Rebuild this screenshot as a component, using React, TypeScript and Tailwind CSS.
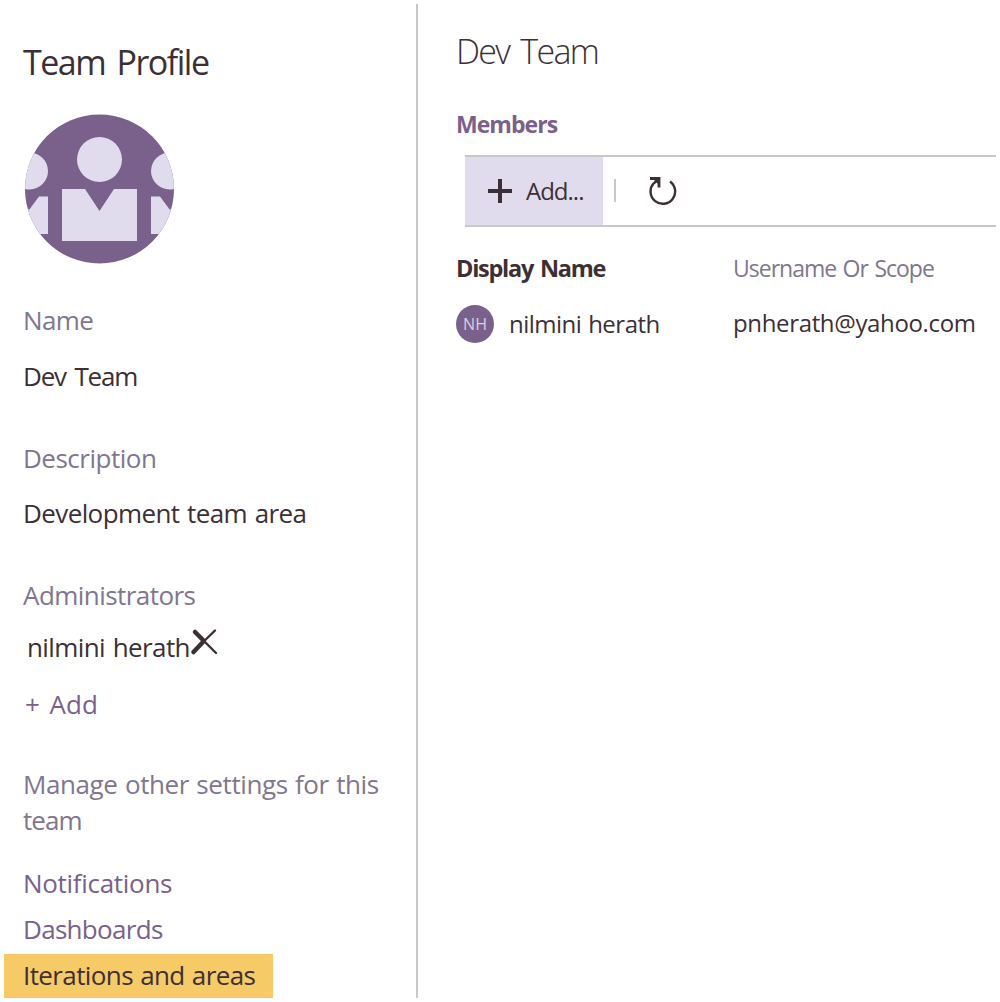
function TeamAvatar() {
  return (
    <svg className="block size-[151px]" viewBox="0 0 151 151" aria-hidden="true">
      <defs>
        <clipPath id="avatar">
          <circle cx="75.5" cy="75" r="74.5" />
        </clipPath>
      </defs>
      <g clipPath="url(#avatar)">
        <rect width="151" height="151" fill="#79618c" />
        <g fill="#e1dced">
          <circle cx="75.5" cy="45.5" r="22.5" />
          <circle cx="5.5" cy="57" r="18.5" />
          <circle cx="145.5" cy="57" r="18.5" />
          <path d="M38 75H61L75.500 97L90 75H113V127H38Z" />
          <path d="M24 82.500H15L5 96L-5 82.500H-10V120H24Z" />
          <path d="M127 82.500H136L146 96L156 82.500V120H127Z" />
        </g>
      </g>
    </svg>
  );
}

const label = "text-[#80768f]";

export default function App() {
  return (
    <main className="flex h-[1002px] w-[1000px] overflow-hidden bg-white font-['Open_Sans','Noto_Sans',sans-serif] text-[26px] leading-9 whitespace-nowrap text-[#3c3036]">
      <aside className="mt-1 h-[994px] w-[418px] shrink-0 border-r-2 border-[#cbc6cc]">
        <h1 className="mt-[36px] ml-[23px] h-[44px] text-[34px] leading-[44px] tracking-[-1.5px] [word-spacing:4px]">Team Profile</h1>
        <div className="mt-[30px] ml-6"><TeamAvatar /></div>
        <div className="ml-[23px]">
          <p className={`mt-[37px] tracking-[-0.6px] ${label}`}>Name</p>
          <p className="mt-5 tracking-[-1.2px] [word-spacing:3px]">Dev Team</p>
          <p className={`mt-[46px] tracking-[-0.5px] ${label}`}>Description</p>
          <p className="mt-[19px] tracking-[-0.6px] [word-spacing:1.5px]">Development team area</p>
          <p className={`mt-[46px] tracking-[-0.55px] ${label}`}>Administrators</p>
          <p className="mt-4 flex pl-[4px]">
            <span className="tracking-[-0.6px] [word-spacing:1.5px]">nilmini herath</span>
            <svg className="-mt-px size-[29px]" viewBox="0 0 29 29" fill="none" stroke="#3c3036" strokeLinecap="round" aria-hidden="true">
              <path d="M5 4L26 25" strokeWidth="2.400" />
              <path d="M5 4L13 12" strokeWidth="4.500" />
              <path d="M25 2.500L3 24" strokeWidth="2.400" />
              <path d="M13 14L3.500 24" strokeWidth="4.500" />
            </svg>
          </p>
          <p className="mt-[21px] pl-[2px] [word-spacing:3px] text-[#79618c]">+ Add</p>
          <p className={`mt-[44px] tracking-[-0.4px] [word-spacing:1px] ${label}`}>Manage other settings for this<br /><span className="tracking-[-0.9px]">team</span></p>
          <a className="mt-[27px] block tracking-[-0.3px] text-[#79618c]">Notifications</a>
          <a className="mt-[10px] block tracking-[-0.7px] text-[#79618c]">Dashboards</a>
        </div>
        <a className="mt-[7px] ml-1 block h-11 w-[269px] bg-[#f6ca66] pt-[3px] pl-[19px] tracking-[-0.6px] [word-spacing:1px]">Iterations and areas</a>
      </aside>
      <section className="w-[578px] pl-[38px] text-2xl leading-9">
        <h2 className="mt-[28.5px] h-[44px] text-[34px] leading-[44px] font-light tracking-[-1.7px] [word-spacing:4px]">Dev Team</h2>
        <h3 className="mt-[33px] text-[23px] leading-9 font-bold tracking-[-0.95px] text-[#79618c]">Members</h3>
        <div className="mt-[13px] ml-[9px] flex h-[72px] items-center border-y-2 border-[#cbc6cc]">
          <button className="flex h-full w-[138px] items-center bg-[#e1dced] pl-[23px]">
            <svg className="size-6" viewBox="0 0 24 24" stroke="#3c3036" strokeWidth="4" aria-hidden="true"><path d="M12 0V24M0 12H24" /></svg>
            <span className="ml-[14px] tracking-[-1px]">Add...</span>
          </button>
          <div className="ml-[11px] h-[23px] w-[2px] bg-[#cbc6cc]" />
          <svg className="ml-[31px] h-[30px] w-[30px]" viewBox="0 0 30 30" fill="none" stroke="#3c3036" strokeWidth="2.400" aria-hidden="true">
            <path d="M12 3L6.500 7.500A12.300 12.300 0 1 0 23 5.500" />
            <path d="M3 2.500H12V11.500" strokeWidth="2.800" />
            <path d="M6 3H12V9Z" fill="#3c3036" stroke="none" />
          </svg>
        </div>
        <div className="mt-[23.5px] grid grid-cols-[277px_1fr]">
          <span className="text-[23.5px] font-bold tracking-[-1.25px] [word-spacing:2px]">Display Name</span>
          <span className={`text-[23px] tracking-[-1px] [word-spacing:1.5px] ${label}`}>Username Or Scope</span>
        </div>
        <div className="mt-[18px] grid grid-cols-[277px_1fr]">
          <div className="flex items-center">
            <div className="mt-px flex size-[38px] items-center justify-center rounded-full bg-[#79618c] text-base text-[#d5cfe2]">NH</div>
            <span className="ml-[15px] tracking-[-0.5px] [word-spacing:1px]">nilmini herath</span>
          </div>
          <span className="pt-px tracking-[-0.35px]">pnherath@yahoo.com</span>
        </div>
      </section>
    </main>
  );
}
